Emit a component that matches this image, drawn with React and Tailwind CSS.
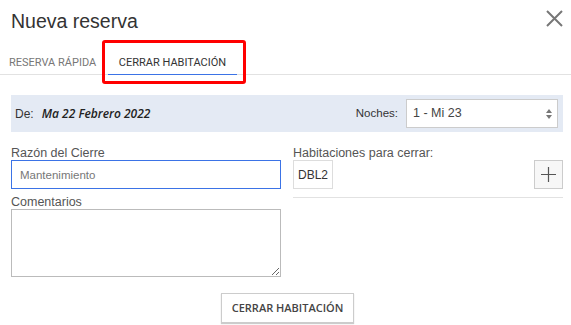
import { useState } from 'react';

// ===============================
// Modal: cerrar habitación
// ===============================
export default function App() {
  const [razon, setRazon] = useState('');
  const [comentarios, setComentarios] = useState('');
  const habitaciones = ['DBL2'];

  return (
    <div className="w-[571px] h-[325px] overflow-hidden bg-white text-[#333] font-['Liberation_Sans',Arial,sans-serif]">
      {/* Cabecera */}
      <div className="flex items-start justify-between pl-[11px] pr-[8px] pt-[9px] h-[40px]">
        <h2 className="text-[19.5px] leading-[24px]">Nueva reserva</h2>
        <button className="text-[#777] mt-[1px]">
          <svg width="17" height="17" viewBox="0 0 17 17" stroke="currentColor" strokeWidth="2">
            <path d="M1 1L16 16M16 1L1 16" />
          </svg>
        </button>
      </div>

      {/* Tabs */}
      <div className="relative flex items-end h-[35px] border-b border-[#e2e2e2] pl-[9px] text-[11px] font-['Roboto',sans-serif]">
        <div className="w-[99px] pb-[3px] text-[#777]">RESERVA RÁPIDA</div>
        <div className="w-[129px] text-center pb-[3px] border-b border-[#3b73e6] text-[#333] -mb-px">
          CERRAR HABITACIÓN
        </div>
        <div className="absolute left-[102px] top-0 w-[144px] h-[44px] border-[3px] border-[#f00] rounded-[3px]" />
      </div>

      <div className="pl-[11px] pr-[8px] pt-[20px]">
        {/* Fecha / noches */}
        <div className="flex items-center h-[37px] bg-[#e4eaf4] pl-[4px] pr-[5px] text-[12px]">
          <span>De:</span>
          <span className="ml-[8px] italic font-semibold text-[12px] text-[#222] font-['Open_Sans',sans-serif]">Ma 22 Febrero 2022</span>
          <span className="ml-auto mr-[8px] text-[11.5px]">Noches:</span>
          <div className="relative w-[152px] h-[29px] bg-white border border-[#ccc] flex items-center pl-[6px] text-[12.5px] text-[#444]">
            1 - Mi 23
            <svg className="absolute right-[5px] top-[9px]" width="6" height="10" viewBox="0 0 6 10" fill="#777">
              <path d="M3 0L6 4H0Z M3 10L0 6H6Z" />
            </svg>
          </div>
        </div>

        {/* Formulario */}
        <div className="grid grid-cols-[270px_270px] gap-x-[12px] mt-[14px] text-[12.5px] text-[#555]">
          <div>
            <label className="block leading-[14px]">Razón del Cierre</label>
            <input
              value={razon}
              onChange={e => setRazon(e.target.value)}
              placeholder="Mantenimiento"
              className="w-[270px] h-[29px] border border-[#3b73e6] px-[8px] text-[11.5px] placeholder:text-[#777] outline-none"
            />
            <label className="block leading-[14px] mt-[6px]">Comentarios</label>
            <textarea
              value={comentarios}
              onChange={e => setComentarios(e.target.value)}
              className="block w-[270px] h-[68px] border border-[#bbb] outline-none"
            />
          </div>
          <div>
            <label className="block leading-[14px]">Habitaciones para cerrar:</label>
            <div className="flex items-start justify-between h-[38px] border-b border-[#e2e2e2]">
              <div className="flex gap-1">
                {habitaciones.map(h => (
                  <div key={h} className="h-[29px] w-[40px] border border-[#ddd] flex items-center justify-center text-[12px] text-[#333]">
                    {h}
                  </div>
                ))}
              </div>
              <button className="w-[29px] h-[29px] bg-[#f7f7f7] border border-[#ccc] flex items-center justify-center text-[#555]">
                <svg width="15" height="15" viewBox="0 0 15 15" stroke="currentColor" strokeWidth="1.2">
                  <path d="M7.5 0V15M0 7.5H15" />
                </svg>
              </button>
            </div>
          </div>
        </div>

        {/* Acción */}
        <div className="flex justify-center mt-[16px] pl-[1px]">
          <button className="h-[30px] w-[133px] bg-white border border-[#ccc] shadow-[0_1px_1px_rgba(0,0,0,0.2)] text-[11px] font-semibold text-[#444] font-['Open_Sans',sans-serif]">
            CERRAR HABITACIÓN
          </button>
        </div>
      </div>
    </div>
  );
}
